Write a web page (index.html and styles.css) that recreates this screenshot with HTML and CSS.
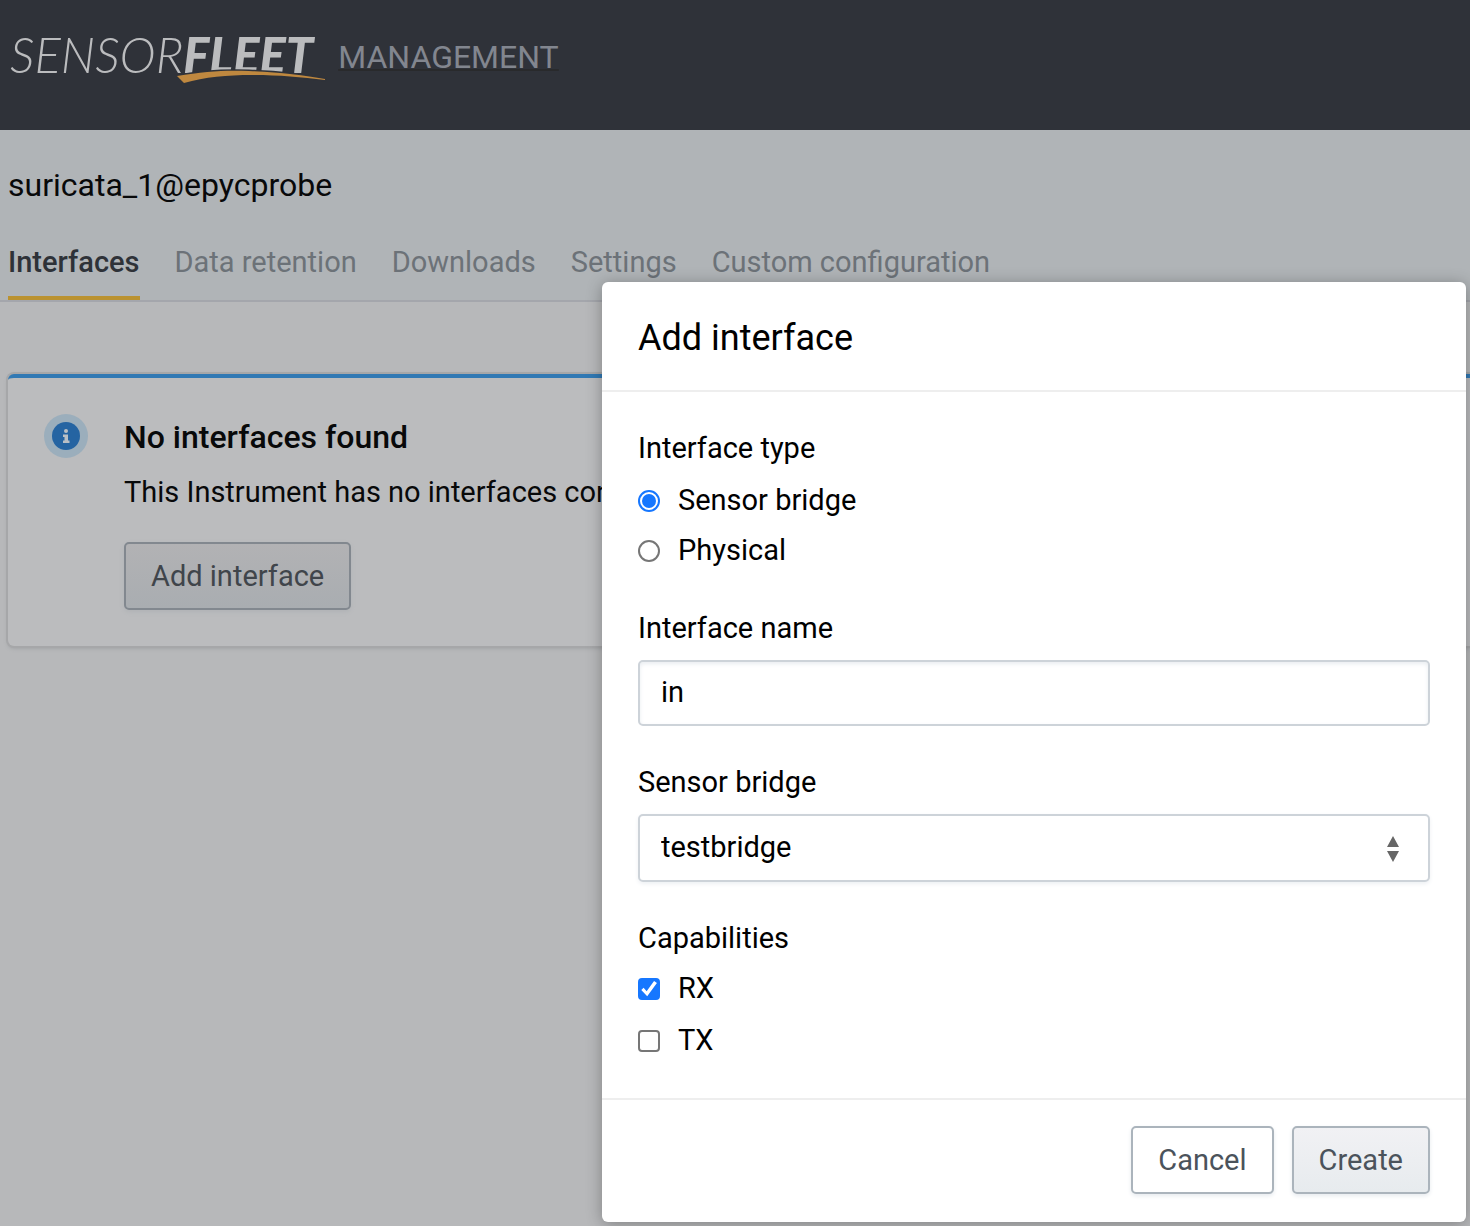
FILE: index.html
```html
<!DOCTYPE html>
<html lang="en">
<head>
<meta charset="utf-8">
<meta name="viewport" content="width=device-width, initial-scale=1">
<title>SensorFleet Management</title>
<link rel="stylesheet" href="styles.css">
</head>
<body>
<header class="topbar">
  <a class="brand" href="#">
    <span class="logo"><span class="logo-thin">SENSOR</span><span class="logo-bold">FLEET</span>
      <svg class="swoosh" viewBox="0 0 148 14" aria-hidden="true"><path d="M0 6C28 1 50 0 72 1c29 1 55 4 76 8v1C124 7 101 5 75 5 50 5 28 7 7 13z" fill="#bf883f" stroke="#2f3239" stroke-width="3" paint-order="stroke"/></svg>
    </span>
    <span class="brand-text">MANAGEMENT</span>
  </a>
</header>
<section class="subheader">
  <h1 class="page-title">suricata_1@epycprobe</h1>
  <nav class="tabs">
    <a class="tab tab--active" href="#">Interfaces</a>
    <a class="tab" href="#">Data retention</a>
    <a class="tab" href="#">Downloads</a>
    <a class="tab" href="#">Settings</a>
    <a class="tab" href="#">Custom configuration</a>
  </nav>
</section>
<main class="content">
  <article class="notice">
    <svg class="notice-icon" viewBox="0 0 44 44" aria-hidden="true">
      <circle cx="22" cy="22" r="22" fill="#9baebc"/>
      <circle cx="22" cy="22" r="14" fill="#2564a2"/>
      <circle cx="22" cy="17" r="2" fill="#b9bfc5"/>
      <path d="M19 20.500h5v6h1.500v2.500H19v-2.500h1.500V23H19z" fill="#b9bfc5"/>
    </svg>
    <div class="notice-body">
      <h2 class="notice-title">No interfaces found</h2>
      <p class="notice-text">This Instrument has no interfaces con</p>
      <button class="button button--dimmed" type="button">Add interface</button>
    </div>
  </article>
</main>
<dialog class="modal" open aria-labelledby="modal-title">
  <form class="modal-form">
    <header class="modal-header"><h2 class="modal-title" id="modal-title">Add interface</h2></header>
    <div class="modal-body">
      <fieldset class="field">
        <legend class="label">Interface type</legend>
        <div class="choices choices--radio">
          <label class="choice"><input class="radio" type="radio" name="type" checked>Sensor bridge</label>
          <label class="choice"><input class="radio" type="radio" name="type">Physical</label>
        </div>
      </fieldset>
      <div class="field">
        <label class="label" for="name">Interface name</label>
        <input class="control control--input" id="name" type="text" value="in">
      </div>
      <div class="field">
        <label class="label" for="bridge">Sensor bridge</label>
        <div class="select-wrap">
          <select class="control control--select" id="bridge"><option>testbridge</option></select>
          <svg class="select-arrows" viewBox="0 0 12 26" aria-hidden="true"><path d="M6 0l6 11H0zM0 15h12L6 26z" fill="#666"/></svg>
        </div>
      </div>
      <fieldset class="field">
        <legend class="label">Capabilities</legend>
        <div class="choices choices--check">
          <label class="choice"><input class="checkbox" type="checkbox" checked>RX</label>
          <label class="choice"><input class="checkbox" type="checkbox">TX</label>
        </div>
      </fieldset>
    </div>
    <footer class="modal-footer">
      <button class="button button--plain" type="button">Cancel</button>
      <button class="button" type="submit">Create</button>
    </footer>
  </form>
</dialog>
</body>
</html>
```
FILE: styles.css
```css
* { box-sizing: border-box; }

body {
  margin: 0;
  min-height: 100vh;
  overflow-x: hidden;
  position: relative;
  background: #b7b8ba;
  color: #000;
  font: 29px/40px Roboto, sans-serif;
}

h1, h2, p { margin: 0; font-weight: 400; }

/* Top bar */
.topbar { height: 130px; padding: 24px 10px; background: #2f3239; }
.brand { display: flex; align-items: flex-start; gap: 25px; width: max-content; text-decoration: none; }
.logo {
  position: relative;
  display: flex;
  color: #bbbcbe;
  font: italic 49px/60px Lato, sans-serif;
}
.logo-thin { font-weight: 300; }
.logo-bold { font-weight: 900; }
.swoosh { position: absolute; right: -12px; bottom: 0; width: 148px; height: 14px; overflow: visible; }
.brand-text {
  color: #82868f;
  font-size: 32px;
  line-height: 66px;
  text-decoration: underline 2px #292a2c;
}

/* Page heading and tabs */
.subheader {
  padding: 32px 8px 0;
  border-bottom: 2px solid #a4a6ac;
  background: #b0b4b7;
}
.page-title { font-size: 32px; line-height: 46px; color: #08090a; }
.tabs { display: flex; gap: 35px; padding-top: 32px; }
.tab {
  padding: 2px 0 14px;
  border-bottom: 4px solid transparent;
  color: #6c7278;
  text-decoration: none;
}
.tab--active { border-color: #ba9230; color: #2e3238; font-weight: 500; }

/* Notice */
.content { padding: 72px 0 0 8px; }
.notice {
  display: flex;
  gap: 36px;
  padding: 36px;
  border-top: 4px solid #3179b4;
  border-radius: 6px 0 0 6px;
  background: #bbbcbe;
  box-shadow: 0 0 0 2px #a6a7a9, 0 2px 4px #999b9e;
}
.notice-icon { flex: none; width: 44px; height: 44px; }
.notice-body { display: flex; flex-direction: column; align-items: flex-start; color: #08090a; }
.notice-title { font-size: 32px; line-height: 46px; font-weight: 500; }
.notice-text { padding: 12px 0 30px; white-space: nowrap; }

/* Buttons */
.button {
  height: 68px;
  padding: 0 25px;
  border: 2px solid #abb4bc;
  border-radius: 5px;
  background: linear-gradient(#f1f1f4, #e7ebee);
  box-shadow: 0 2px 4px #e7ebef;
  color: #4b535b;
  font: inherit;
}
.button--plain { background: #fff; }
.button--dimmed {
  border-color: #82888f;
  background: linear-gradient(#b2b2b4, #a9adb1);
  box-shadow: 0 2px 4px #b0b3b6;
  color: #40454b;
}

/* Modal */
.modal {
  position: absolute;
  inset: 282px 4px auto auto;
  width: calc(100% - 8px);
  max-width: 864px;
  margin: 0;
  padding: 0;
  border: 0;
  border-radius: 6px;
  background: #fff;
  box-shadow: 0 2px 16px rgba(0, 0, 0, .3);
  color: #000;
}
.modal-header { padding: 32px 36px 28px; border-bottom: 2px solid #eee; }
.modal-title { font-size: 36px; line-height: 48px; }
.modal-body { display: flex; flex-direction: column; gap: 36px; padding: 36px 36px 38px; }
.modal-footer {
  display: flex;
  justify-content: flex-end;
  gap: 18px;
  padding: 26px 36px 28px;
  border-top: 2px solid #eee;
}

/* Form fields */
.field { display: flex; flex-direction: column; min-width: 0; margin: 0; padding: 0; border: 0; }
.label { padding: 0 0 12px; }
.choices { display: grid; justify-items: start; }
.choices--radio { gap: 10px; padding-bottom: 2px; }
.choices--check { gap: 12px; margin-top: -2px; }
.choice { display: flex; align-items: center; gap: 18px; }
.radio, .checkbox {
  appearance: none;
  display: grid;
  place-items: center;
  width: 22px;
  height: 22px;
  margin: 2px 0 0;
  border: 2px solid #767676;
  background: #fff;
}
.radio { border-radius: 50%; }
.radio:checked { border-color: #1677ff; }
.radio:checked::before {
  content: "";
  width: 14px;
  height: 14px;
  border-radius: 50%;
  background: #1677ff;
}
.checkbox { border-radius: 4px; }
.checkbox:checked { border-color: #1677ff; background: #1677ff; }
.checkbox:checked::before {
  content: "";
  width: 18px;
  height: 18px;
  background: #fff;
  clip-path: polygon(7% 56%, 20% 43%, 37% 62%, 78% 5%, 94% 17%, 40% 90%);
}
.control {
  width: 100%;
  padding: 0 21px 2px;
  border: 2px solid #cdd3d9;
  border-radius: 5px;
  background: #fff;
  color: #000;
  font: inherit;
}
.control--input { height: 66px; box-shadow: inset 0 2px 4px #e9edf1; }
.control--select { height: 68px; appearance: none; box-shadow: 0 2px 4px #edf0f3; }
.select-wrap { position: relative; display: grid; }
.select-arrows {
  position: absolute;
  right: 31px;
  top: 22px;
  width: 12px;
  height: 26px;
  pointer-events: none;
}
```
